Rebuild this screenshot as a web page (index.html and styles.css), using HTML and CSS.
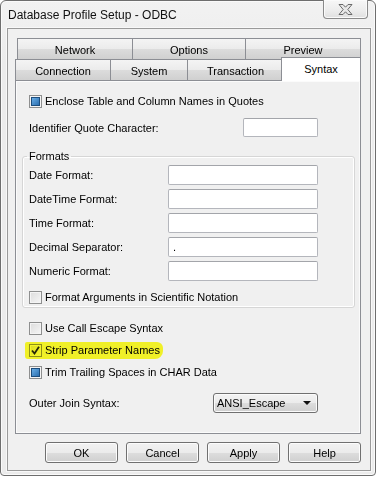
FILE: index.html
```html
<!DOCTYPE html>
<html lang="en">
<head>
    <meta charset="UTF-8">
    <meta name="viewport" content="width=device-width, initial-scale=1.0">
    <title>Database Profile Setup - ODBC</title>
    <link rel="stylesheet" href="styles.css">
</head>
<body>
    <div class="window">
        <div class="titlebar">
            <span class="title">Database Profile Setup - ODBC</span>
            <span class="close-btn">
                <svg width="15" height="11" viewBox="0 0 15 11">
                    <path d="M1 0.5 H5 L7.5 3.2 L10 0.5 H14 L9.8 5.5 L14 10.5 H10 L7.5 7.8 L5 10.5 H1 L5.2 5.5 Z" fill="#e8e8e8" stroke="#6a6a6a" stroke-width="1" stroke-linejoin="round"/>
                </svg>
            </span>
        </div>

        <div class="client">
            <div class="tabs">
                <div class="tab-row back">
                    <div class="tab w116">Network</div>
                    <div class="tab w114">Options</div>
                    <div class="tab w116">Preview</div>
                </div>
                <div class="tab-row front">
                    <div class="tab w96">Connection</div>
                    <div class="tab w78">System</div>
                    <div class="tab w97">Transaction</div>
                    <div class="tab selected">Syntax</div>
                </div>
            </div>

            <div class="pane">
                <div class="check-row">
                    <span class="cb mixed"></span>
                    <span>Enclose Table and Column Names in Quotes</span>
                </div>

                <div class="field-row first">
                    <span class="label wide">Identifier Quote Character:</span>
                    <span class="input small"></span>
                </div>

                <fieldset class="group">
                    <legend>Formats</legend>
                    <div class="field-row">
                        <span class="label">Date Format:</span>
                        <span class="input"></span>
                    </div>
                    <div class="field-row">
                        <span class="label">DateTime Format:</span>
                        <span class="input"></span>
                    </div>
                    <div class="field-row">
                        <span class="label">Time Format:</span>
                        <span class="input"></span>
                    </div>
                    <div class="field-row">
                        <span class="label">Decimal Separator:</span>
                        <span class="input">.</span>
                    </div>
                    <div class="field-row">
                        <span class="label">Numeric Format:</span>
                        <span class="input"></span>
                    </div>
                    <div class="check-row in-group">
                        <span class="cb"></span>
                        <span>Format Arguments in Scientific Notation</span>
                    </div>
                </fieldset>

                <div class="check-row after-group">
                    <span class="cb"></span>
                    <span>Use Call Escape Syntax</span>
                </div>
                <div class="check-row tight marked">
                    <span class="cb">
                        <svg width="11" height="11" viewBox="0 0 11 11">
                            <path d="M2 5.5 L4.5 8.5 L9 1.8" fill="none" stroke="#262626" stroke-width="1.8"/>
                        </svg>
                    </span>
                    <span>Strip Parameter Names</span>
                </div>
                <div class="check-row tight">
                    <span class="cb mixed"></span>
                    <span>Trim Trailing Spaces in CHAR Data</span>
                </div>

                <div class="field-row join">
                    <span class="label join-label">Outer Join Syntax:</span>
                    <span class="combo">
                        <span>ANSI_Escape</span>
                        <span class="arrow"></span>
                    </span>
                </div>
            </div>

            <div class="buttons">
                <button class="btn">OK</button>
                <button class="btn">Cancel</button>
                <button class="btn">Apply</button>
                <button class="btn">Help</button>
            </div>
        </div>
    </div>
</body>
</html>
```

FILE: styles.css
```css
* {
    box-sizing: border-box;
}
body {
    margin: 0;
    background: #fff;
    font-family: "Liberation Sans", Arial, sans-serif;
    font-size: 11px;
    color: #000;
}
.window {
    width: 376px;
    height: 476px;
    border: 1px solid #6e6e6e;
    border-radius: 6px 6px 4px 4px;
    background: linear-gradient(#f2f2f2, #ececec 60px);
    box-shadow: inset 0 0 0 1px #fafafa;
}
.titlebar {
    height: 27px;
    display: flex;
    align-items: center;
    padding-left: 7px;
}
.title {
    font-size: 12px;
    color: #111;
}
.close-btn {
    margin-left: auto;
    margin-right: 7px;
    align-self: flex-start;
    margin-top: -1px;
    width: 45px;
    height: 19px;
    border: 1px solid #8a8a8a;
    border-top: none;
    border-radius: 0 0 4px 4px;
    background: linear-gradient(#f7f7f7, #ececec 60%, #e0e0e0);
    box-shadow: inset 0 0 0 1px #fafafa;
    display: flex;
    align-items: center;
    justify-content: center;
}
.client {
    height: 443px;
    margin: 0 4px 0 6px;
    border: 1px solid #9a9a9a;
    background: #f0f0f0;
    box-shadow: 0 0 0 1px #f8f8f8;
    padding: 9px 0 0 7px;
}
.tabs {
    width: 346px;
}
.tab-row {
    display: flex;
    align-items: flex-start;
}
.tab-row.back {
    padding-left: 2px;
}
.tab {
    height: 21px;
    border: 1px solid #8c8e94;
    border-bottom: none;
    background: linear-gradient(#f4f4f4, #ebebeb 50%, #dcdcdc 51%, #d0d0d0);
    display: flex;
    align-items: center;
    justify-content: center;
    padding-top: 1px;
}
.tab + .tab {
    margin-left: -1px;
}
.w116 { width: 116px; }
.w114 { width: 114px; }
.w96 { width: 96px; }
.w78 { width: 78px; }
.w97 { width: 97px; }
.tab.selected {
    position: relative;
    z-index: 1;
    width: 80px;
    height: 24px;
    margin-left: -3px;
    margin-top: -2px;
    margin-bottom: -1px;
    background: #fff;
    padding-top: 0;
    padding-bottom: 2px;
}
.pane {
    width: 346px;
    height: 354px;
    border: 1px solid #8c8e94;
    background: #f0f0f0;
    box-shadow: inset 0 0 0 1px #fbfbfb;
    padding: 10px 5px 0 13px;
}
.check-row {
    height: 20px;
    display: flex;
    align-items: center;
    gap: 3px;
    position: relative;
}
.check-row.in-group {
    margin-top: 6px;
}
.check-row.after-group {
    margin-top: 10px;
}
.check-row.tight {
    margin-top: 2px;
}
.check-row.marked::before {
    content: "";
    position: absolute;
    left: -4px;
    top: 2px;
    width: 138px;
    height: 17px;
    background: #ffff2a;
    border-radius: 2px 6px 8px 3px;
    mix-blend-mode: multiply;
}
.cb {
    width: 13px;
    height: 13px;
    border: 1px solid #8e8f8f;
    background: linear-gradient(135deg, #dcdcdc, #f6f6f6);
    box-shadow: inset 0 0 0 1px #f4f4f4;
    display: flex;
    align-items: center;
    justify-content: center;
    flex-shrink: 0;
}
.cb.mixed::after {
    content: "";
    width: 7px;
    height: 7px;
    border: 1px solid #1d4e7e;
    background: linear-gradient(135deg, #6aaee6, #2b6fb0);
}
.field-row {
    height: 20px;
    display: flex;
    align-items: center;
}
.field-row + .field-row {
    margin-top: 4px;
}
.field-row.first {
    margin-top: 7px;
    height: 19px;
}
.label {
    width: 139px;
    flex-shrink: 0;
}
.label.wide {
    width: 214px;
}
.label.join-label {
    width: 184px;
}
.input {
    width: 150px;
    height: 100%;
    background: #fff;
    border: 1px solid #b4b6bc;
    border-top-color: #a3a5aa;
    border-radius: 2px;
    padding: 3px 0 0 4px;
}
.input.small {
    width: 75px;
}
.group {
    width: 333px;
    margin: 13px 0 0 -7px;
    padding: 2px 6px 0 6px;
    border: 1px solid #d6d6d6;
    border-radius: 3px;
    box-shadow: inset 0 0 0 1px #fff;
}
.group legend {
    padding: 0 2px;
    margin-left: -2px;
    line-height: 13px;
}
.field-row.join {
    margin-top: 11px;
    height: 19px;
}
.combo {
    width: 105px;
    height: 20px;
    border: 1px solid #707070;
    border-radius: 3px;
    background: linear-gradient(#f3f3f3, #ebebeb 50%, #dddddd 51%, #cfcfcf);
    box-shadow: inset 0 0 0 1px #fbfbfb;
    display: flex;
    align-items: center;
    padding: 0 6px 0 3px;
    justify-content: space-between;
}
.arrow {
    width: 0;
    height: 0;
    border-left: 4px solid transparent;
    border-right: 4px solid transparent;
    border-top: 4px solid #111;
}
.buttons {
    width: 346px;
    margin-top: 8px;
    display: flex;
    justify-content: flex-end;
    gap: 8px;
}
.btn {
    width: 73px;
    height: 21px;
    border: 1px solid #707070;
    border-radius: 3px;
    background: linear-gradient(#f2f2f2, #ebebeb 50%, #dddddd 51%, #cfcfcf);
    box-shadow: inset 0 0 0 1px #fcfcfc;
    font-family: "Liberation Sans", Arial, sans-serif;
    font-size: 11px;
    color: #000;
    padding: 0;
}
```
